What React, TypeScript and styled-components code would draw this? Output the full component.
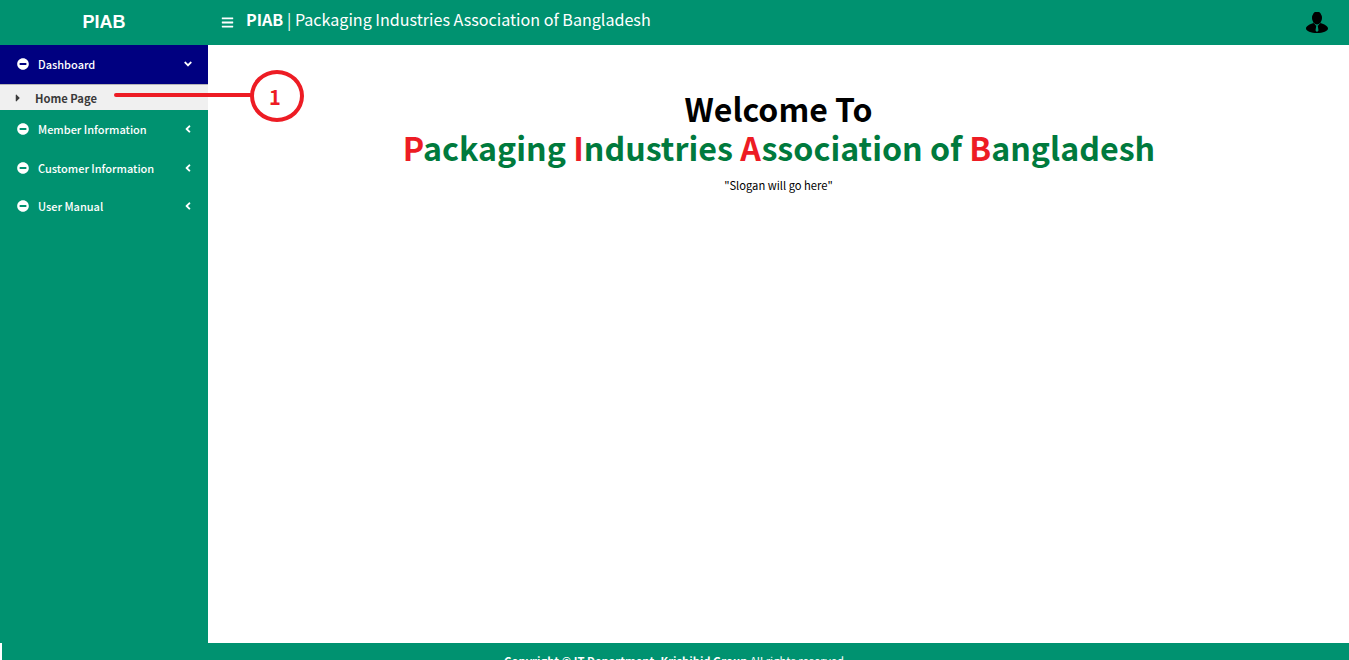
import React from 'react';
import styled, { createGlobalStyle } from 'styled-components';
import { FaMinusCircle, FaAngleDown, FaAngleLeft, FaCaretRight, FaBars } from 'react-icons/fa';

const GREEN = '#009270';

const GlobalStyle = createGlobalStyle`
  html, body {
    margin: 0;
    padding: 0;
    height: 660px;
    overflow: hidden;
    background: #fff;
    font-family: 'Noto Sans CJK SC', 'Lato', sans-serif;
  }
  * { box-sizing: border-box; }
`;

const Page = styled.div`
  position: relative;
  display: grid;
  grid-template-rows: 45px 598px 17px;
  height: 660px;
  overflow: hidden;
`;

const Header = styled.header`
  display: flex;
  align-items: center;
  background: ${GREEN};
  color: #fff;
`;

const Brand = styled.div`
  width: 208px;
  text-align: center;
  font-family: 'Liberation Sans', Arial, sans-serif;
  font-size: 18px;
  font-weight: 700;
`;

const Toggle = styled.span`
  display: flex;
  margin: 0 0 0 13px;
  font-size: 13px;
`;

const Title = styled.div`
  margin: -8px 0 0 12px;
  font-size: 16.1px;
  line-height: 24px;
  strong { font-weight: 700; }
`;

const UserIcon = styled.svg`
  margin: 1px 21px 0 auto;
  width: 22px;
  height: 22px;
`;

const Body = styled.div`
  display: flex;
`;

const Sidebar = styled.nav`
  width: 208px;
  background: ${GREEN};
`;

const MenuItem = styled.div<{ $active?: boolean; $height: number }>`
  display: flex;
  align-items: center;
  height: ${({ $height }) => $height}px;
  padding: 0 14px 2px 17px;
  background: ${({ $active }) => ($active ? '#000080' : 'transparent')};
  color: #fff;
  font-size: 11px;
  line-height: 16px;
  font-weight: 500;
`;

const MenuLabel = styled.span`
  margin-left: 9px;
  flex: 1;
`;

const SubItem = styled.div`
  display: flex;
  align-items: center;
  height: 26px;
  padding: 0 0 0 12px;
  background: #f0f0f0;
  border-top: 1px solid #b5b5b5;
  color: #3a3a3a;
  font-size: 11.2px;
  line-height: 16px;
  font-weight: 700;
  span { margin-left: 11px; }
`;

const Main = styled.main`
  flex: 1;
  padding-top: 44px;
  text-align: center;
  color: #000;
`;

const Welcome = styled.h1`
  margin: 0;
  font-size: 32px;
  line-height: 39px;
  font-weight: 700;
`;

const Association = styled.h1`
  margin: 0 0 0 1px;
  font-size: 32.2px;
  line-height: 39px;
  font-weight: 700;
  color: #007a3d;
  b { color: #ed1c24; font-weight: 700; }
`;

const Slogan = styled.p`
  margin: 10px 0 0;
  font-size: 11.2px;
  line-height: 16px;
`;

const Footer = styled.footer`
  margin-left: 2px;
  background: ${GREEN};
  color: #fff;
  text-align: center;
  font-size: 11.25px;
  line-height: 16px;
  padding: 10px 3px 0 0;
  white-space: nowrap;
  strong { font-weight: 700; }
`;

const Callout = styled.div`
  position: absolute;
  left: 114px;
  top: 70px;
  display: flex;
  align-items: center;
`;

const CalloutLine = styled.div`
  width: 138px;
  height: 4px;
  margin-bottom: 2px;
  border-radius: 2px;
  background: #ed1c24;
`;

const CalloutBadge = styled.div`
  width: 54px;
  height: 52px;
  margin-left: -2px;
  padding-right: 4px;
  border: 4px solid #ed1c24;
  border-radius: 50%;
  background: #fff;
  color: #ed1c24;
  display: flex;
  align-items: center;
  justify-content: center;
  font-size: 20px;
  font-weight: 700;
`;

const menu = [
  { label: 'Member Information', height: 39 },
  { label: 'Customer Information', height: 39 },
  { label: 'User Manual', height: 38 },
];

export default function App() {
  return (
    <Page>
      <GlobalStyle />
      <Header>
        <Brand>PIAB</Brand>
        <Toggle><FaBars /></Toggle>
        <Title><strong>PIAB</strong> | Packaging Industries Association of Bangladesh</Title>
        <UserIcon viewBox="0 0 22 22">
          <ellipse cx="11" cy="6" rx="5" ry="6.5" fill="#000" />
          <path d="M0 16.5c0-2.5 4-4.5 7.5-5.5l3.5 3 3.5-3c3.5 1 7.5 3 7.5 5.5 0 2.5-5 4.5-11 4.5S0 19 0 16.5z" fill="#000" />
          <path d="M8.5 11.5l2.5 2 2.5-2-1 1.5-.7 1 .7 4.5-1.5 1.5-1.5-1.5.7-4.5-.7-1z" fill={GREEN} />
        </UserIcon>
      </Header>
      <Body>
        <Sidebar>
          <MenuItem $active $height={39}>
            <FaMinusCircle size={12} />
            <MenuLabel>Dashboard</MenuLabel>
            <FaAngleDown size={12} />
          </MenuItem>
          <SubItem>
            <FaCaretRight size={12} />
            <span>Home Page</span>
          </SubItem>
          {menu.map((item) => (
            <MenuItem key={item.label} $height={item.height}>
              <FaMinusCircle size={12} />
              <MenuLabel>{item.label}</MenuLabel>
              <FaAngleLeft size={12} />
            </MenuItem>
          ))}
        </Sidebar>
        <Main>
          <Welcome>Welcome To</Welcome>
          <Association>
            <b>P</b>ackaging <b>I</b>ndustries <b>A</b>ssociation of <b>B</b>angladesh
          </Association>
          <Slogan>"Slogan will go here"</Slogan>
        </Main>
      </Body>
      <Footer>
        <strong>Copyright © IT Department, Krishibid Group</strong> All rights reserved
      </Footer>
      <Callout>
        <CalloutLine />
        <CalloutBadge>1</CalloutBadge>
      </Callout>
    </Page>
  );
}
